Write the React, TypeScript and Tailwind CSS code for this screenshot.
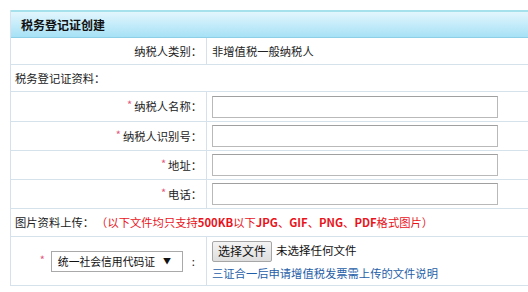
import React from "react";

const font = { fontFamily: '"Noto Sans CJK SC", "Liberation Sans", sans-serif' };

function Star() {
  return <span className="text-[#e4587c] text-[11px] mr-[2px] relative top-[-2px]">*</span>;
}

function Row({ h, label, children }: { h: string; label: React.ReactNode; children?: React.ReactNode }) {
  return (
    <div className={`flex border-b border-[#d5e2ec] ${h}`}>
      <div className="w-[196px] shrink-0 border-r border-[#d5e2ec] flex items-center justify-end pr-[4px]">{label}</div>
      <div className="flex-1 flex items-center pl-[5px]">{children}</div>
    </div>
  );
}

function Input() {
  return <div className="w-[286px] h-[22px] border border-[#b9b9b9] border-t-[#a0a0a0] bg-white" />;
}

export default function App() {
  return (
    <div className="w-[528px] h-[292px] overflow-hidden bg-white text-[11.3px] text-[#222]" style={font}>
      <div className="ml-[10px] mt-[10px] w-[540px] border-l border-[#d5e2ec]">
        <div className="h-[28px] border-t-2 border-[#a4e1ec] border-b border-b-[#8ccfe6] bg-gradient-to-b from-[#e2f6fd] to-[#a6e1f6] flex items-center pl-[10px] font-bold text-[12px] text-[#111]">
          税务登记证创建
        </div>
        <Row h="h-[27px]" label="纳税人类别：">非增值税一般纳税人</Row>
        <div className="h-[27px] border-b border-[#d5e2ec] flex items-center pl-[4px]">税务登记证资料：</div>
        <Row h="h-[30px]" label={<><Star />纳税人名称：</>}><Input /></Row>
        <Row h="h-[29px]" label={<><Star />纳税人识别号：</>}><Input /></Row>
        <Row h="h-[29px]" label={<><Star />地址：</>}><Input /></Row>
        <Row h="h-[29px]" label={<><Star />电话：</>}><Input /></Row>
        <div className="h-[28px] border-b border-[#d5e2ec] flex items-center pl-[4px]">
          图片资料上传：
          <span className="text-[#e8141c] ml-[2px]">
            （以下文件均只支持<b>500KB</b>以下<b>JPG</b>、<b>GIF</b>、<b>PNG</b>、<b>PDF</b>格式图片）
          </span>
        </div>
        <div className="flex border-b border-[#d5e2ec] h-[49px]">
          <div className="w-[196px] shrink-0 border-r border-[#d5e2ec] flex items-center justify-end pr-[11px]">
            <Star />
            <div className="ml-[4px] h-[21px] w-[132px] border border-[#a9a9a9] flex items-center pl-[6px] text-[10.8px] text-[#111]">
              统一社会信用代码证
              <span className="text-[8px] ml-[8px]">▼</span>
            </div>
            <span className="ml-[9px]">:</span>
          </div>
          <div className="flex-1 flex flex-col justify-center pl-[5px]">
            <div className="flex items-center">
              <div className="h-[21px] w-[60px] justify-center border border-[#a6a6a6] rounded-[2px] bg-gradient-to-b from-[#f4f4f4] to-[#dedede] flex items-center text-[#111] text-[12px]">
                选择文件
              </div>
              <span className="ml-[4px] text-[#111] text-[11.5px]">未选择任何文件</span>
            </div>
            <div className="mt-[3px] text-[#1f5ea8]">三证合一后申请增值税发票需上传的文件说明</div>
          </div>
        </div>
      </div>
    </div>
  );
}
